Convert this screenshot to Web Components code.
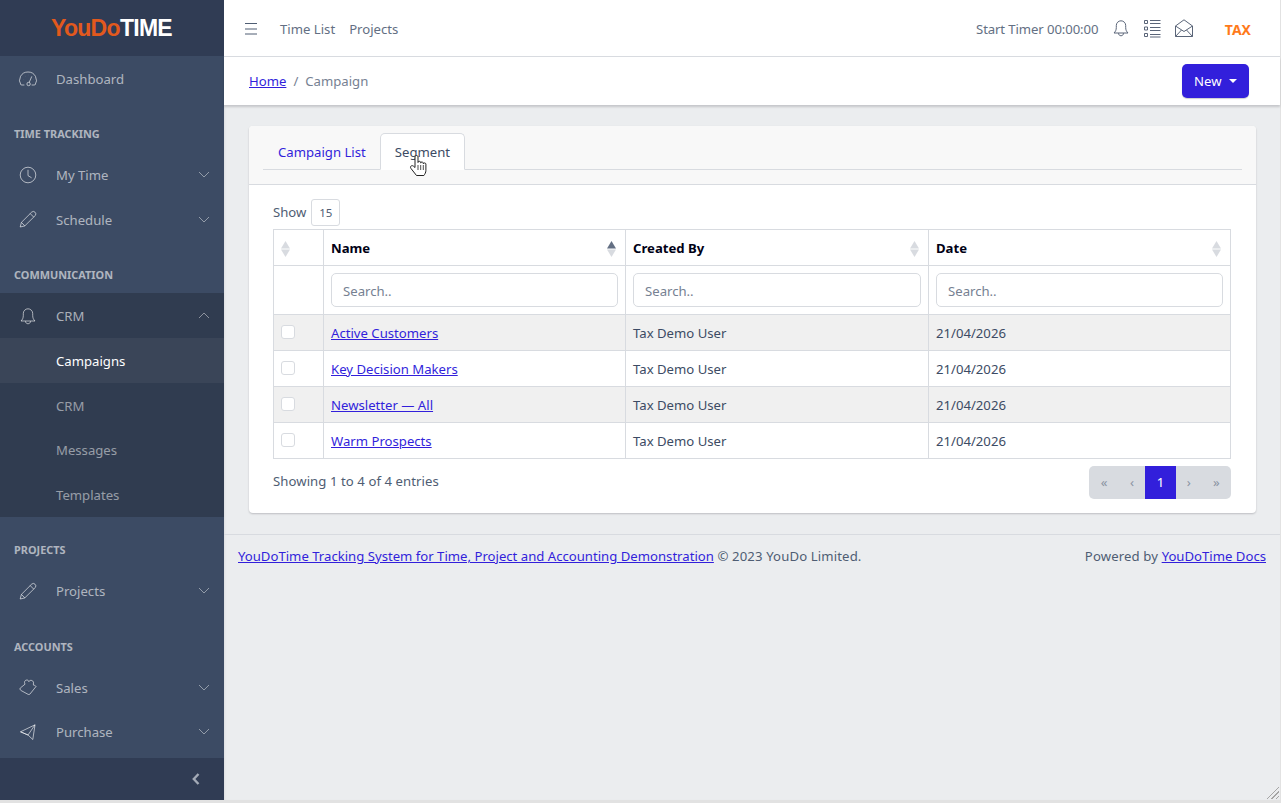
<!DOCTYPE html>
<html lang="en">
<head>
<meta charset="utf-8">
<title>Campaign</title>
<style>
html, body { margin: 0; height: 803px; overflow: hidden; background: #e2e2e2; }
body { font: 13.15px/21px "Noto Sans", sans-serif; color: #4f5d73; }
</style>
</head>
<body>
<app-shell>
    <app-sidebar slot="side">
        <side-item icon="gauge">Dashboard</side-item>
        <side-title>Time Tracking</side-title>
        <side-item icon="clock" arrow="down">My Time</side-item>
        <side-item icon="pencil" arrow="down">Schedule</side-item>
        <side-title>Communication</side-title>
        <side-group>
            <side-item icon="bell" arrow="up" dark>CRM</side-item>
            <side-item sub active>Campaigns</side-item>
            <side-item sub>CRM</side-item>
            <side-item sub>Messages</side-item>
            <side-item sub>Templates</side-item>
        </side-group>
        <side-title>Projects</side-title>
        <side-item icon="pencil" arrow="down">Projects</side-item>
        <side-title>Accounts</side-title>
        <side-item icon="puzzle" arrow="down">Sales</side-item>
        <side-item icon="send" arrow="down">Purchase</side-item>
    </app-sidebar>
    <top-bar></top-bar>
    <sub-bar></sub-bar>
    <tab-card>
        <data-table></data-table>
    </tab-card>
    <app-footer></app-footer>
</app-shell>

<script>
const ICONS = {
    gauge: `<path d="M3.200 17h3.200M13.600 17h3.200M3 17A8.300 8.300 0 0 1 10 4a8.300 8.300 0 0 1 7 13"/><circle cx="10.600" cy="16" r="1.700"/><path d="M11.200 14.400l2.600-6M5.600 11.500h.1M7.400 8.300h.1M10.600 7h.1M15.300 11.500h.1"/>`,
    clock: `<circle cx="10" cy="10" r="7.800"/><path d="M10 4.800V10.600l3.600 2.200"/>`,
    pencil: `<path d="M2.200 18l1.200-4.600L13.800 3a2.500 2.500 0 0 1 3.500 3.500L6.800 16.900zM3.400 13.400l3.400 3.500M12.200 4.600l3.500 3.500"/>`,
    bell: `<path d="M3 15h14c-1.500-1.500-2.300-3-2.300-5.500V7.500a4.700 4.700 0 0 0-9.400 0v2C5.300 12 4.500 13.500 3 15z"/><path d="M7.500 15.200c0 3.400 5 3.400 5 0"/>`,
    puzzle: `<path d="M2.300 11L7 7.200C5.800 5 7 3 8.800 3c1.200 0 1.800 .7 2 1.600 .6-1 1.800-1.600 3-1.100 1.500 .6 2.200 2 1.500 3.500l.3 1.200c1 0 2.200 .6 2.400 1.300L12 17c-.5 .6-1.200 .7-1.800 .4L3 13.500c-1-.6-1.300-1.800-.7-2.500z"/>`,
    send: `<path d="M2.500 9.800L17 2.800 14.800 17.500 10 13zM10 13L17 2.800M2.500 9.800l7.500 3.200"/>`,
    bars: `<path d="M1 3.500h12M1 9h12M1 14h12"/>`,
    list: `<path d="M7 2.500h10.500M7 5.500h10.500M7 9.500h10.500M7 12.500h10.500M7 16.500h10.500M7 19h10.500"/><path d="M1.500 2.500h3v3h-3zM1.500 9h3v3h-3zM1.500 15.500h3v3h-3z"/>`,
    mail: `<path d="M1.500 8L10 1.800 18.500 8v10.500h-17zM1.500 8L10 13.500 18.500 8M1.500 18.500L7.500 12M18.500 18.500L12.500 12"/>`
};
const icon = (name, size, box = 20) =>
    `<svg width="${size}" height="${size}" viewBox="0 0 ${box} ${box}" fill="none" stroke="currentColor" stroke-width="1">${ICONS[name]}</svg>`;

customElements.define("app-shell", class extends HTMLElement {
    connectedCallback() {
        this.attachShadow({mode: "open"}).innerHTML = `
<style>
:host { display: grid; grid-template-columns: 224px 1fr; grid-template-rows: auto 1fr; width: 1280px; height: 800px; background: #ebedef; position: relative; }
.side { grid-row: 1 / 3; display: flex; min-height: 0; }
.main { display: flex; flex-direction: column; min-width: 0; grid-row: 1 / 3; box-shadow: inset 2px 0 3px -2px rgba(0,0,21,.12); }
.grip { position: absolute; right: 1px; bottom: 1px; width: 14px; height: 14px;
    background: repeating-linear-gradient(135deg, transparent 0 2px, #a5a5a5 2px 3px);
    clip-path: polygon(100% 0, 100% 100%, 0 100%); }
</style>
<div class="side"><slot name="side"></slot></div>
<div class="main"><slot></slot></div>
<div class="grip"></div>`;
    }
});

customElements.define("app-sidebar", class extends HTMLElement {
    connectedCallback() {
        this.attachShadow({mode: "open"}).innerHTML = `
<style>
:host { display: flex; flex-direction: column; width: 224px; background: #3c4b64; color: rgba(255,255,255,.6); }
.brand { height: 56px; flex: none; background: #303c54; display: flex; align-items: center; justify-content: center; padding-right: 1px; box-sizing: border-box;
    font: bold 23px/1 "Liberation Sans", sans-serif; letter-spacing: -.7px; }
.brand b { color: #e2591d; font-weight: bold; }
.brand span { color: #fff; }
nav { flex: 1; min-height: 0; }
.foot { height: 42px; flex: none; background: #303c54; display: flex; align-items: center; justify-content: flex-end; padding-right: 23px; box-sizing: border-box; color: #a3aab6; }
</style>
<div class="brand"><b>YouDo</b><span>TIME</span></div>
<nav><slot></slot></nav>
<div class="foot"><svg width="10" height="12" viewBox="0 0 10 12" fill="none" stroke="currentColor" stroke-width="2.400"><path d="M7.500 1L2.800 6l4.700 5"/></svg></div>`;
    }
});

customElements.define("side-title", class extends HTMLElement {
    connectedCallback() {
        this.attachShadow({mode: "open"}).innerHTML = `
<style>
:host { display: block; margin-top: 16px; height: 35.500px; box-sizing: border-box; padding: 8.300px 14px 0; font-size: 10.900px; line-height: 17px; font-weight: 700; text-transform: uppercase; color: rgba(255,255,255,.6); }
</style>
<slot></slot>`;
    }
});

customElements.define("side-group", class extends HTMLElement {
    connectedCallback() {
        this.attachShadow({mode: "open"}).innerHTML = `
<style>:host { display: block; background: rgba(0,0,0,.2); }</style>
<slot></slot>`;
    }
});

customElements.define("side-item", class extends HTMLElement {
    connectedCallback() {
        const name = this.getAttribute("icon");
        const arrow = this.getAttribute("arrow");
        const arrowPath = arrow === "up" ? "M1 7l5-5 5 5" : "M1 2l5 5 5-5";
        this.attachShadow({mode: "open"}).innerHTML = `
<style>
:host { display: flex; align-items: center; height: 44.750px; box-sizing: border-box; padding: 0 14px 0 18px; color: rgba(255,255,255,.6); }
:host([sub]) { padding-left: 56px; color: rgba(255,255,255,.5); }
:host([active]) { background: rgba(255,255,255,.05); color: #fff; }
.ic { width: 38px; flex: none; display: flex; }
.tx { flex: 1; padding-top: 2px; }
.ar { display: flex; opacity: .75; }
</style>
${name ? `<span class="ic">${icon(name, 20)}</span>` : ""}
<span class="tx"><slot></slot></span>
${arrow ? `<span class="ar"><svg width="12" height="9" viewBox="0 0 12 9" fill="none" stroke="currentColor"><path d="${arrowPath}"/></svg></span>` : ""}`;
    }
});

customElements.define("top-bar", class extends HTMLElement {
    connectedCallback() {
        this.attachShadow({mode: "open"}).innerHTML = `
<style>
:host { display: flex; align-items: center; height: 57px; flex: none; box-sizing: border-box; background: #fff; border-bottom: 1px solid #d8dbe0; padding: 0 29px 0 20px; color: #636f83; }
.bars { display: flex; margin-right: 20px; color: #4f5d73; }
.links { display: flex; gap: 14px; flex: 1; padding-top: 2px; }
.timer { margin-right: 13px; letter-spacing: -.1px; padding-top: 2px; }
.icons { display: flex; gap: 11.500px; align-items: center; margin-right: 30.500px; color: #5a6578; }
.tax { color: #ff7a1a; font-weight: 700; font-size: 14px; padding-top: 2px; }
svg { display: block; }
</style>
<span class="bars">${icon("bars", 16, 16)}</span>
<div class="links"><span>Time List</span><span>Projects</span></div>
<span class="timer">Start Timer 00:00:00</span>
<div class="icons">${icon("bell", 20)}${icon("list", 20)}${icon("mail", 20)}</div>
<span class="tax">TAX</span>`;
    }
});

customElements.define("sub-bar", class extends HTMLElement {
    connectedCallback() {
        this.attachShadow({mode: "open"}).innerHTML = `
<style>
:host { display: flex; align-items: center; justify-content: space-between; height: 48px; flex: none; box-sizing: border-box; background: #fff; padding: 0 31px 0 25px; box-shadow: 0 2px 2px rgba(0,0,21,.16); color: #768192; position: relative; }
a { color: #321fdb; text-decoration: underline; }
.sep { margin: 0 7px; }
.crumbs { margin-top: 1px; }
.btn { display: flex; align-items: center; gap: 7px; height: 34px; padding: 0 12.500px; box-sizing: border-box; background: #321fdb; color: #fff; border-radius: 5px; box-shadow: 0 1px 1px rgba(0,0,21,.2); }
.btn i { border: 4px solid transparent; border-top-color: #fff; border-bottom: 0; }
</style>
<div class="crumbs"><a href="#">Home</a><span class="sep">/</span>Campaign</div>
<div class="btn">New <i></i></div>`;
    }
});

customElements.define("tab-card", class extends HTMLElement {
    connectedCallback() {
        this.attachShadow({mode: "open"}).innerHTML = `
<style>
:host { display: block; margin: 21px 24px 21px 25px; background: #fff; border-radius: 4px; box-shadow: 0 1px 2px rgba(0,0,21,.2); }
.head { height: 59px; box-sizing: border-box; background: #f8f8f8; border-bottom: 1px solid #d8dbe0; border-radius: 4px 4px 0 0; padding: 7px 14px 0; }
.tabs { display: flex; height: 37px; box-sizing: border-box; border-bottom: 1px solid #d8dbe0; }
.tab { padding: 0 14px; height: 37px; box-sizing: border-box; border: 1px solid transparent; line-height: 36px; color: #321fdb; position: relative; }
.tab:first-child { padding-right: 13px; }
.tab.on { background: #fff; color: #3c4b64; border-color: #d8dbe0; border-bottom-color: #fff; border-radius: 5px 5px 0 0; }
.hand { position: absolute; left: 28px; top: 21px; }
.body { padding: 14px 25px 14px 24px; }
</style>
<div class="head"><div class="tabs">
<div class="tab">Campaign List</div>
<div class="tab on">Segment
<svg class="hand" width="18" height="22" viewBox="0 0 18 22"><path d="M6 2c0-2 3-2 3 0v5.500c0-1.600 2.700-1.600 2.700 0v.6c0-1.500 2.600-1.500 2.600 .2v.6c0-1.300 2.600-1.300 2.600 .2v6.400c0 2-1 3.500-2 5H7.500L2 13.500c-1.500-2 .8-3.800 2.500-2.300L6 12.500z" fill="#fff" stroke="#222" stroke-width="1"/><path d="M9 10v5M11.700 10v5M14.300 10v5" stroke="#222" stroke-width=".8" fill="none"/></svg>
</div>
</div></div>
<div class="body"><slot></slot></div>`;
    }
});

const SEGMENTS = ["Active Customers", "Key Decision Makers", "Newsletter — All", "Warm Prospects"];

customElements.define("sort-mark", class extends HTMLElement {
    connectedCallback() {
        const up = this.hasAttribute("up") ? "#636f83" : "#d8dbe0";
        this.attachShadow({mode: "open"}).innerHTML = `
<style>:host { display: block; width: 9px; height: 16px; } svg { display: block; }</style>
<svg width="9" height="16" viewBox="0 0 9 16"><path d="M4.500 0l4.500 7.500H0z" fill="${up}"/><path d="M4.500 16L9 8.500H0z" fill="#d8dbe0"/></svg>`;
    }
});

customElements.define("search-box", class extends HTMLElement {
    connectedCallback() {
        this.attachShadow({mode: "open"}).innerHTML = `
<style>:host { display: block; height: 34px; box-sizing: border-box; border: 1px solid #d8dbe0; border-radius: 5px; padding: 0 11px; line-height: 35px; color: #768192; background: #fff; }</style>
<slot></slot>`;
        this.textContent = "Search..";
    }
});

customElements.define("data-table", class extends HTMLElement {
    connectedCallback() {
        const rows = SEGMENTS.map(name => `
<tr><td class="ck"><span class="box"></span></td><td><a href="#">${name}</a></td><td>Tax Demo User</td><td>21/04/2026</td></tr>`).join("");
        this.attachShadow({mode: "open"}).innerHTML = `
<style>
:host { display: block; color: #4f5d73; }
.show { display: flex; align-items: center; gap: 5px; height: 27px; margin-bottom: 3px; }
.len { width: 29px; height: 27px; box-sizing: border-box; border: 1px solid #d8dbe0; border-radius: 3px; text-align: center; line-height: 25px; font-size: 11.500px; }
table { width: 957px; border-collapse: collapse; table-layout: fixed; color: #3c4b64; }
th, td { border: 1px solid #d8dbe0; padding: 2px 7px 0; height: 36px; box-sizing: border-box; text-align: left; }
th { color: #000015; font-weight: 700; }
th .h { display: flex; justify-content: space-between; align-items: center; padding-right: 2px; }
th .c { display: flex; }
.filter td { height: 49px; padding: 0 7px; }
tbody tr:nth-child(odd) { background: #f0f0f0; }
a { color: #321fdb; }
.ck { padding: 0 0 0 7px; }
.box { display: block; width: 14px; height: 14px; box-sizing: border-box; border: 1px solid #d8dbe0; border-radius: 3px; background: #fff; margin-top: -2px; }
.bottom { display: flex; justify-content: space-between; margin-top: 7px; }
.info { margin-top: 5px; letter-spacing: .07px; }
</style>
<div class="show">Show <div class="len">15</div></div>
<table>
<colgroup><col style="width:50px"><col style="width:302px"><col style="width:303px"><col style="width:302px"></colgroup>
<thead>
<tr><th><div class="c"><sort-mark></sort-mark></div></th><th><div class="h">Name<sort-mark up></sort-mark></div></th><th><div class="h">Created By<sort-mark></sort-mark></div></th><th><div class="h">Date<sort-mark></sort-mark></div></th></tr>
<tr class="filter"><td></td><td><search-box></search-box></td><td><search-box></search-box></td><td><search-box></search-box></td></tr>
</thead>
<tbody>${rows}</tbody>
</table>
<div class="bottom"><div class="info">Showing 1 to 4 of 4 entries</div><page-nav></page-nav></div>`;
    }
});

customElements.define("page-nav", class extends HTMLElement {
    connectedCallback() {
        this.attachShadow({mode: "open"}).innerHTML = `
<style>
:host { display: flex; height: 33px; background: #d8dbe0; border-radius: 5px; color: #8a93a2; overflow: hidden; line-height: 33px; text-align: center; }
span { width: 28px; box-sizing: border-box; }
.l { padding-left: 2px; }
.r { width: 27.500px; padding-right: 2px; }
.on { width: 31px; background: #321fdb; color: #fff; }
</style>
<span class="l">«</span><span class="l">‹</span><span class="on">1</span><span class="r">›</span><span class="r">»</span>`;
    }
});

customElements.define("app-footer", class extends HTMLElement {
    connectedCallback() {
        this.attachShadow({mode: "open"}).innerHTML = `
<style>
:host { display: flex; justify-content: space-between; height: 44px; box-sizing: border-box; border-top: 1px solid #d8dbe0; padding: 11px 14px 0; color: #4f5d73; }
a { color: #321fdb; }
.t { letter-spacing: .13px; }
</style>
<div><a href="#">YouDoTime Tracking System for Time, Project and Accounting Demonstration</a><span class="t"> © 2023 YouDo Limited.</span></div>
<div><span class="t">Powered by </span><a href="#">YouDoTime Docs</a></div>`;
    }
});
</script>
</body>
</html>
